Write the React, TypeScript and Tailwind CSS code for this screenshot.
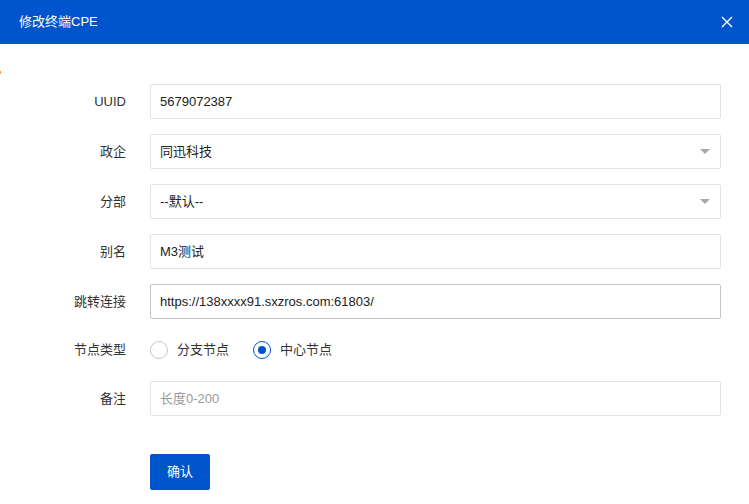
import React from "react";

const font = { fontFamily: '"Liberation Sans", "Noto Sans CJK SC", sans-serif' };

function Row({ label, children }: { label: string; children: React.ReactNode }) {
  return (
    <div className="flex items-center">
      <div className="w-[126px] text-right text-[13px] text-[#333]">{label}</div>
      <div className="ml-[24px] w-[571px]">{children}</div>
    </div>
  );
}

function Input({ value, placeholder, dark }: { value?: string; placeholder?: string; dark?: boolean }) {
  return (
    <div
      className={`h-[35px] border ${dark ? "border-[#c4c4c4]" : "border-[#e3e3e3]"} rounded-[2px] flex items-center px-[9px] text-[13px] ${value ? "text-[#222]" : "text-[#999]"}`}
    >
      {value ?? placeholder}
    </div>
  );
}

function Select({ value }: { value: string }) {
  return (
    <div className="h-[35px] border border-[#e3e3e3] rounded-[2px] flex items-center justify-between pl-[9px] pr-[10px] text-[13px] text-[#222]">
      <span>{value}</span>
      <svg width="10" height="5" viewBox="0 0 10 5">
        <path d="M0 0 L10 0 L5 5 Z" fill="#a8a8a8" />
      </svg>
    </div>
  );
}

export default function App() {
  return (
    <div className="w-[749px] h-[504px] bg-white relative overflow-hidden" style={font}>
      <div className="h-[44px] bg-[#0055cc] flex items-center justify-between pl-[19px] pr-[16px]">
        <span className="text-white text-[13px]">修改终端CPE</span>
        <svg width="12" height="12" viewBox="0 0 12 12">
          <path d="M1 1 L11 11 M11 1 L1 11" stroke="white" strokeWidth="1.4" />
        </svg>
      </div>
      <div className="absolute left-0 top-[71px] w-[1px] h-[3px] bg-[#f0a040]" />
      <div className="pt-[40px] flex flex-col gap-[15px]">
        <Row label="UUID">
          <Input value="5679072387" />
        </Row>
        <Row label="政企">
          <Select value="同迅科技" />
        </Row>
        <Row label="分部">
          <Select value="--默认--" />
        </Row>
        <Row label="别名">
          <Input value="M3测试" />
        </Row>
        <Row label="跳转连接">
          <Input value="https://138xxxx91.sxzros.com:61803/" dark />
        </Row>
        <Row label="节点类型">
          <div className="h-[32px] flex items-center text-[13px] text-[#333]">
            <span className="w-[18px] h-[18px] rounded-full border-[1.5px] border-[#c8c8c8] bg-white" />
            <span className="ml-[9px]">分支节点</span>
            <span className="ml-[24px] w-[18px] h-[18px] rounded-full border-[1.5px] border-[#0055cc] bg-white flex items-center justify-center">
              <span className="w-[8px] h-[8px] rounded-full bg-[#0055cc]" />
            </span>
            <span className="ml-[9px]">中心节点</span>
          </div>
        </Row>
        <Row label="备注">
          <Input placeholder="长度0-200" />
        </Row>
      </div>
      <div className="pl-[150px] mt-[38px]">
        <button className="w-[60px] h-[36px] bg-[#0055cc] text-white text-[13px] rounded-[2px]">确认</button>
      </div>
    </div>
  );
}
